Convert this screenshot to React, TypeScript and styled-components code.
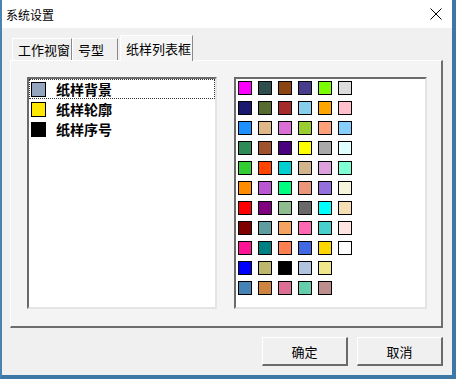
import React from 'react'
import styled, {createGlobalStyle} from 'styled-components'

const GlobalStyle = createGlobalStyle`
  html, body {
    margin: 0;
    padding: 0;
    background: #3d77a6;
  }
  body {
    font-family: "Noto Sans CJK SC", "Noto Sans", sans-serif;
  }
`

const Frame = styled.div`
  width: 456px;
  height: 379px;
  box-sizing: border-box;
  border-left: 2px solid #4a82b0;
  border-right: 4px solid #3d77a6;
  border-bottom: 4px solid #3d77a6;
  display: flex;
  flex-direction: column;
  background: #f0f0f0;
`

const TitleBar = styled.div`
  height: 28px;
  background: #ffffff;
  display: flex;
  align-items: center;
  justify-content: space-between;
  padding: 0 10px 0 4px;
  font-size: 12px;
  color: #000;
`

const Body = styled.div`
  flex: 1;
  display: flex;
  flex-direction: column;
  padding: 5px 9px 0 8px;
`

const TabStrip = styled.div`
  display: flex;
  align-items: flex-end;
  height: 27px;
  padding-left: 2px;
  position: relative;
  z-index: 1;
`

const Tab = styled.div<{$active?: boolean; $w: number}>`
  box-sizing: border-box;
  width: ${(p) => p.$w}px;
  height: ${(p) => (p.$active ? 26 : 22)}px;
  margin: ${(p) => (p.$active ? '0 -2px -1px 0' : '0')};
  margin-left: ${(p) => (p.$active ? '2px' : '0')};
  border-top: 1px solid #ffffff;
  border-left: 1px solid #ffffff;
  border-right: 1px solid #8a8a8a;
  background: ${(p) => (p.$active ? '#f6f6f6' : '#f0f0f0')};
  font-size: 13px;
  display: flex;
  align-items: ${(p) => (p.$active ? 'flex-start' : 'center')};
  padding-top: ${(p) => (p.$active ? '3px' : '0')};
  padding-left: 5px;
  color: #000;
`

const Panel = styled.div`
  box-sizing: border-box;
  height: 268px;
  border-top: 1px solid #ffffff;
  border-left: 1px solid #ffffff;
  border-right: 2px solid #6e6e6e;
  border-bottom: 2px solid #6e6e6e;
  background: #f4f4f4;
  padding: 16px 14px 17px 16px;
  display: flex;
  gap: 17px;
`

const SunkenBox = styled.div`
  flex: 1;
  box-sizing: border-box;
  background: #ffffff;
  border-top: 2px solid #6a6a6a;
  border-left: 2px solid #6a6a6a;
  border-right: 2px solid #e4e4e4;
  border-bottom: 2px solid #e4e4e4;
`

const List = styled(SunkenBox)`
  padding: 0;
`

const ListItem = styled.div<{$focused?: boolean}>`
  height: 20px;
  box-sizing: border-box;
  display: flex;
  align-items: center;
  gap: 10px;
  padding-left: 1px;
  outline: ${(p) => (p.$focused ? '1px dotted #333' : 'none')};
  outline-offset: -1px;
  font-size: 14px;
  font-weight: 700;
  color: #000;
`

const ListSwatch = styled.span<{$c: string}>`
  width: 15px;
  height: 15px;
  box-sizing: border-box;
  border: 1px solid #000;
  background: ${(p) => p.$c};
  margin-left: 1px;
`

const Palette = styled(SunkenBox)`
  padding: 2px;
  display: grid;
  grid-template-columns: repeat(6, 14px);
  grid-auto-rows: 14px;
  gap: 6px;
  align-content: start;
`

const Chip = styled.span<{$c: string}>`
  box-sizing: border-box;
  border: 1px solid #000;
  background: ${(p) => p.$c};
`

const ButtonRow = styled.div`
  display: flex;
  justify-content: flex-end;
  gap: 9px;
  padding-top: 9px;
`

const Button = styled.button`
  width: 86px;
  height: 29px;
  box-sizing: border-box;
  background: #f0f0f0;
  border-top: 1px solid #ffffff;
  border-left: 1px solid #ffffff;
  border-right: 2px solid #6a6a6a;
  border-bottom: 2px solid #6a6a6a;
  font-family: "Noto Sans CJK SC", sans-serif;
  font-size: 13px;
  color: #000;
  padding: 0;
`

const items = [
  {label: '纸样背景', color: '#94a6be'},
  {label: '纸样轮廓', color: '#ffe800'},
  {label: '纸样序号', color: '#000000'},
]

const colors = [
  '#ff00ff', '#2f4f4f', '#8b4513', '#483d8b', '#7cfc00', '#dcdcdc',
  '#191970', '#556b2f', '#a52a2a', '#87ceeb', '#ffa500', '#ffc0cb',
  '#1e90ff', '#deb887', '#da70d6', '#9acd32', '#ffa07a', '#87cefa',
  '#2e8b57', '#a0522d', '#4b0082', '#ffff00', '#a9a9a9', '#e0ffff',
  '#32cd32', '#ff4500', '#00ced1', '#d2b48c', '#dda0dd', '#7fffd4',
  '#ff8c00', '#ba55d3', '#00ff7f', '#e9967a', '#9370db', '#f5f5dc',
  '#ff0000', '#800080', '#8fbc8f', '#696969', '#00ffff', '#f5deb3',
  '#800000', '#5f9ea0', '#f4a460', '#ff69b4', '#48d1cc', '#ffe4e1',
  '#ff1493', '#008080', '#ff7f50', '#4169e1', '#ffd700', '#ffffff',
  '#0000ff', '#bdb76b', '#000000', '#b0c4de', '#f0e68c', null,
  '#4682b4', '#cd853f', '#db7093', '#66cdaa', '#bc8f8f',
]

const CloseIcon = () => (
  <svg width='12' height='12' viewBox='0 0 12 12'>
    <path d='M0.5 0.5 L11.5 11.5 M11.5 0.5 L0.5 11.5' stroke='#000' strokeWidth='1' />
  </svg>
)

export default function App() {
  return (
    <>
      <GlobalStyle />
      <Frame>
        <TitleBar>
          <span>系统设置</span>
          <CloseIcon />
        </TitleBar>
        <Body>
          <TabStrip>
            <Tab $w={60}>工作视窗</Tab>
            <Tab $w={46}>号型</Tab>
            <Tab $w={73} $active>
              纸样列表框
            </Tab>
          </TabStrip>
          <Panel>
            <List>
              {items.map((it, i) => (
                <ListItem key={it.label} $focused={i === 0}>
                  <ListSwatch $c={it.color} />
                  {it.label}
                </ListItem>
              ))}
            </List>
            <Palette>
              {colors.map((c, i) =>
                c ? <Chip key={i} $c={c} /> : <span key={i} />
              )}
            </Palette>
          </Panel>
          <ButtonRow>
            <Button>确定</Button>
            <Button>取消</Button>
          </ButtonRow>
        </Body>
      </Frame>
    </>
  )
}
